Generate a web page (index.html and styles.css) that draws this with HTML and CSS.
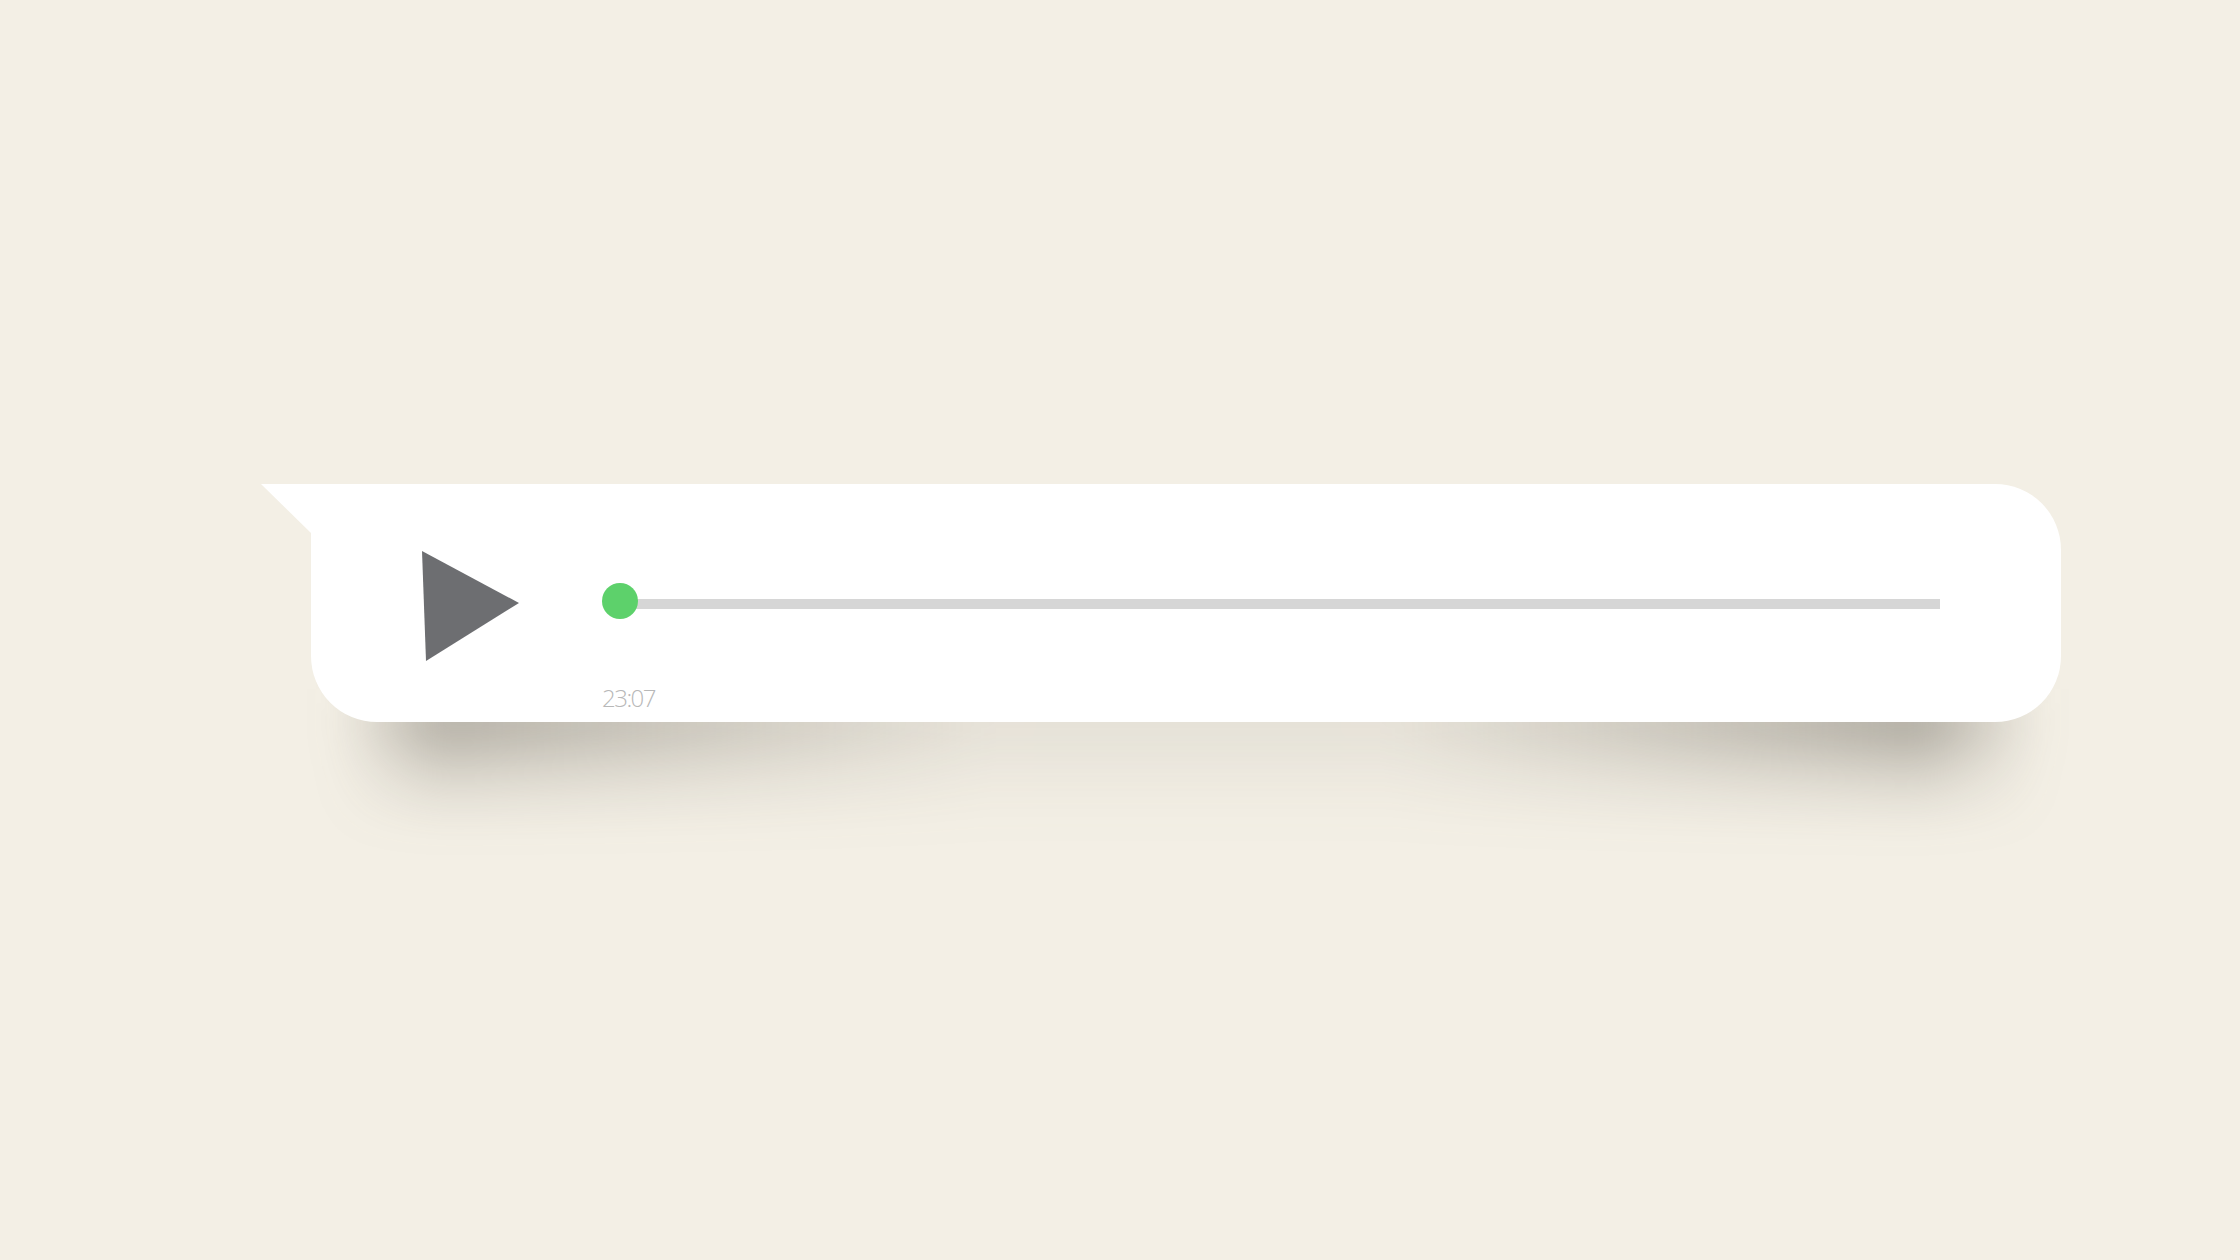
FILE: index.html
```html
<!DOCTYPE html>
<html>
<head>
<meta charset="utf-8">
<link rel="stylesheet" href="styles.css">
</head>
<body>
<div class="stage">
  <div class="bubble">
    <div class="shadow"></div>
    <svg class="play" width="98" height="112" viewBox="0 0 98 112">
      <polygon points="0,0 97,52 4,110" fill="#6d6e71"/>
    </svg>
    <div class="player">
      <div class="slider">
        <div class="dot"></div>
        <div class="track"></div>
      </div>
      <div class="time">23:07</div>
    </div>
  </div>
</div>
</body>
</html>
```
FILE: styles.css
```css
html {
  background: #f3efe5;
}
body {
  margin: 0;
  padding: 0;
}
.stage {
  padding: 484px 0 0 311px;
  height: 1260px;
  box-sizing: border-box;
}
.bubble {
  position: relative;
  width: 1750px;
  height: 238px;
  background: #fff;
  border-radius: 0 66px 66px 66px;
  display: flex;
  align-items: flex-start;
}
.bubble::before {
  content: "";
  position: absolute;
  left: -50px;
  top: 0;
  width: 51px;
  height: 50px;
  background: #fff;
  clip-path: polygon(0 0, 100% 0, 100% 100%);
}
.shadow {
  position: absolute;
  left: 25px;
  right: 20px;
  top: 205px;
  height: 140px;
  z-index: -1;
  filter: blur(20px);
}
.shadow::before {
  content: "";
  position: absolute;
  inset: 0;
  background: linear-gradient(to right,
    rgba(95, 90, 80, 0) 0%,
    rgba(95, 90, 80, 0.42) 6%,
    rgba(95, 90, 80, 0.3) 18%,
    rgba(95, 90, 80, 0.09) 38%,
    rgba(95, 90, 80, 0.09) 62%,
    rgba(95, 90, 80, 0.32) 82%,
    rgba(95, 90, 80, 0.45) 93%,
    rgba(95, 90, 80, 0) 100%);
  -webkit-mask-image: linear-gradient(to bottom, #000 0%, #000 30%, rgba(0,0,0,0.4) 60%, transparent 100%);
  mask-image: linear-gradient(to bottom, #000 0%, #000 30%, rgba(0,0,0,0.4) 60%, transparent 100%);
}
.play {
  display: block;
  margin: 67px 0 0 111px;
  flex: none;
}
.player {
  margin: 99px 0 0 82px;
  display: flex;
  flex-direction: column;
}
.slider {
  display: flex;
  align-items: flex-start;
  width: 1338px;
  height: 36px;
}
.dot {
  width: 36px;
  height: 36px;
  border-radius: 50%;
  background: #5dd16b;
  flex: none;
  position: relative;
  z-index: 1;
}
.track {
  flex: 1;
  height: 10px;
  margin: 16px 0 0 -18px;
  background: #d6d6d6;
}
.time {
  margin-top: 66px;
  font-family: "Open Sans", sans-serif;
  font-weight: 300;
  font-size: 24px;
  line-height: 25px;
  letter-spacing: -1.5px;
  color: #b8b8b8;
}
```
